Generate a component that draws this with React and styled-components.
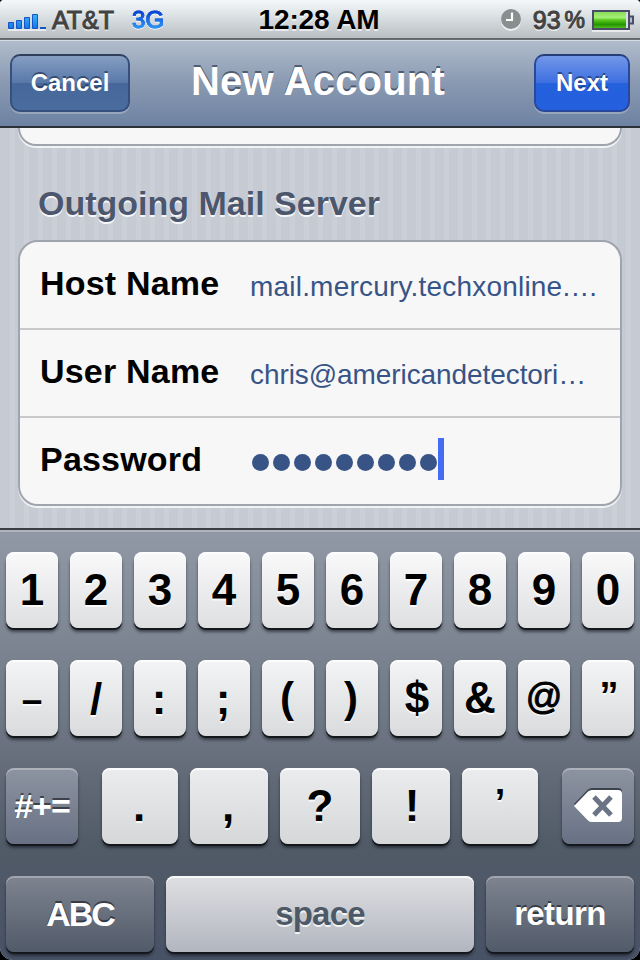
import React from "react";
import styled, { createGlobalStyle, css } from "styled-components";

const Global = createGlobalStyle`
  * { box-sizing: border-box; }
  html, body { margin: 0; padding: 0; background: #000; }
  body { font-family: "Liberation Sans", Arial, sans-serif; overflow: hidden; }
`;

const Phone = styled.main`
  width: 640px;
  height: 960px;
  display: flex;
  flex-direction: column;
  overflow: hidden;
  border-radius: 4px 4px 13px 13px;
  background: #c5cad3;
`;

const StatusBar = styled.header`
  height: 40px;
  flex: none;
  display: grid;
  grid-template-columns: 1fr auto 1fr;
  align-items: center;
  padding: 0 6px 0 8px;
  background: linear-gradient(#f4f8fa 0, #dfe4e7 14px, #b9bec2 38px, #5d6063 38px, #6f7275 40px);
`;

const StatusSide = styled.div`
  display: flex;
  align-items: center;
  justify-content: ${(p) => (p.$end ? "flex-end" : "flex-start")};
  height: 38px;
`;

const StatusText = styled.span`
  font-size: ${(p) => p.$size || 25}px;
  line-height: 38px;
  color: #424242;
  -webkit-text-stroke: 1px #424242;
  text-shadow: 0 2px 0 rgba(255, 255, 255, 0.65);
  margin-left: ${(p) => p.$gap || 0}px;
  margin-right: ${(p) => p.$after || 0}px;
`;

const Network = styled.span`
  margin-left: 18px;
  font-size: 24px;
  line-height: 38px;
  color: transparent;
  background: linear-gradient(#0a3fd0 10px, #2f9cf5 28px);
  background-clip: text;
  -webkit-text-stroke: 1px transparent;
  filter: drop-shadow(0.5px 0 0 #1f6fe6) drop-shadow(0 1px 0 rgba(255, 255, 255, 0.8));
`;

const Clock = styled.time`
  font-size: 28px;
  font-weight: 700;
  line-height: 38px;
  margin-right: 4px;
  letter-spacing: -0.1px;
  color: #000;
  text-shadow: 0 2px 0 rgba(255, 255, 255, 0.6);
`;

const NavBar = styled.nav`
  height: 88px;
  flex: none;
  display: grid;
  grid-template-columns: 120px 1fr 96px;
  align-items: start;
  padding: 14px 10px 0;
  border-top: 1px solid #d5dce4;
  border-bottom: 2px solid #2c3139;
  background: linear-gradient(#b0bccc, #8999b1 50%, #6d82a3);
`;

const NavButton = styled.button`
  height: 58px;
  margin: -1px 0 0;
  padding: 0 0 1px;
  border: 2px solid ${(p) => (p.$primary ? "#29479b" : "#35507d")};
  border-top-color: ${(p) => (p.$primary ? "#263f7b" : "#303f5c")};
  border-radius: 10px;
  font: 700 24px/50px "Liberation Sans", Arial, sans-serif;
  color: #fff;
  text-shadow: 0 -2px 0 rgba(20, 30, 60, 0.55);
  box-shadow: 0 2px 0 rgba(255, 255, 255, 0.25);
  background: ${(p) =>
    p.$primary
      ? "linear-gradient(#7397e8, #3c6fe0 50%, #2461dc 51%, #245fdf)"
      : "linear-gradient(#869ec2, #5878a9 50%, #456799 51%, #4a6c9f)"};
`;

const Title = styled.h1`
  margin: 0 28px 0 0;
  font-size: 40px;
  line-height: 52px;
  letter-spacing: 0.2px;
  text-align: center;
  white-space: nowrap;
  color: #fff;
  text-shadow: 0 -2px 0 rgba(40, 50, 70, 0.65);
`;

const Content = styled.section`
  height: 400px;
  flex: none;
  overflow: hidden;
  padding: 0 18px;
  background:
    linear-gradient(#c5cad3, #c5cad3) 0 0 / 9px 100% no-repeat,
    repeating-linear-gradient(90deg, #cbd0d8 0 5px, #c5cad3 5px 14px) 10px 0;
`;

const panel = css`
  background: #f7f7f7;
  border: 2px solid #a0a5ad;
  box-shadow: 0 2px 0 rgba(255, 255, 255, 0.75);
`;

const PreviousGroup = styled.div`
  ${panel}
  height: 18px;
  border-top: 0;
  border-radius: 0 0 20px 20px;
`;

const GroupTitle = styled.h2`
  margin: 38px 0 0 20px;
  height: 56px;
  font-size: 34px;
  line-height: 39px;
  color: #4c566c;
  text-shadow: 0 2px 0 #f5f7fa;
`;

const Group = styled.div`
  ${panel}
  border-radius: 20px;
  height: 266px;
`;

const Field = styled.label`
  display: grid;
  grid-template-columns: 210px 1fr;
  height: 88px;
  padding: 0 20px;
  border-bottom: ${(p) => (p.$last ? "0" : "2px solid #c8c9cb")};
`;

const Label = styled.span`
  font-size: 34px;
  font-weight: 700;
  line-height: 82px;
  letter-spacing: 0.2px;
`;

const Value = styled.span`
  font-size: 28px;
  line-height: 90px;
  letter-spacing: ${(p) => p.$tracking || 0}px;
  white-space: nowrap;
  color: #385487;
`;

const Secret = styled.span`
  display: flex;
  align-items: center;
  gap: 4px;
  height: 82px;
  padding-left: 2px;
`;

const Dot = styled.i`
  width: 17px;
  height: 17px;
  margin-top: 7px;
  border-radius: 50%;
  background: #385487;
`;

const Caret = styled.i`
  width: 6px;
  height: 42px;
  margin-left: -3px;
  background: #446df4;
`;

const Keyboard = styled.section`
  flex: 1;
  display: flex;
  flex-direction: column;
  gap: 32px;
  padding: 22px 6px 0;
  border-top: 2px solid #3b3f44;
  box-shadow: inset 0 2px 0 #b0b4bd;
  background: linear-gradient(#9299a6, #6b7280 49%, #515b67 73%, #485266);
`;

const KeyRow = styled.div`
  display: grid;
  grid-template-columns: ${(p) => p.$columns};
  column-gap: 12px;
  height: 76px;
`;

const ModifierSlot = styled.div`
  display: grid;
  grid-template-columns: 72px;
  justify-content: ${(p) => (p.$end ? "end" : "start")};
`;

const tones = {
  number: "linear-gradient(#f9f9fa, #dedfe1)",
  symbol: "linear-gradient(#f3f4f6, #dadbdd)",
  punctuation: "linear-gradient(#ebecee, #d6d7d9)",
  space: "linear-gradient(#dedfe2, #b2b6bf)",
  modifier: "linear-gradient(#8d94a1, #687184)",
  action: "linear-gradient(#7e8490, #515a69)",
};
const isDark = (tone) => tone === "modifier" || tone === "action";

const Key = styled.button`
  display: flex;
  align-items: center;
  justify-content: center;
  min-width: 0;
  padding: 0;
  border: 0;
  border-radius: 8px;
  font: 700 ${(p) => p.$size || 44}px/76px "Liberation Sans", Arial, sans-serif;
  letter-spacing: ${(p) => p.$tracking || 0}px;
  color: ${(p) => (isDark(p.$tone) ? "#fff" : p.$tone === "space" ? "#4e5967" : "#000")};
  text-shadow: ${(p) => (isDark(p.$tone) ? "0 -2px 0 rgba(30,35,45,.7)" : "0 2px 0 rgba(255,255,255,.8)")};
  background: ${(p) => tones[p.$tone]};
  box-shadow: inset 0 2px 0 ${(p) => (isDark(p.$tone) ? "rgba(255,255,255,.28)" : "rgba(255,255,255,.8)")},
    0 2px 0 #14171b, 0 4px 3px rgba(20, 25, 32, 0.6);
`;

const Glyph = styled.span`
  transform: translate(${(p) => p.$nudge || 0}px, ${(p) => p.$shift || 0}px);
  font-weight: ${(p) => p.$weight || 700};
  -webkit-text-stroke: ${(p) => (p.$weight === 400 ? "1px #000" : "0")};
`;

const Signal = () => (
  <svg width="40" height="22" viewBox="0 0 40 22">
    <defs>
      <linearGradient id="signal" x2="0" y2="1">
        <stop stopColor="#39b5fc" />
        <stop offset="1" stopColor="#1474e8" />
      </linearGradient>
    </defs>
    <path d="M0 20h38v2H0z" fill="#fff" opacity=".6" />
    <g fill="url(#signal)" stroke="#1257c5">
      <path d="M.5 13.500h5v6h-5zM8.500 11.500h5v8h-5zM16.500 8.500h5v11h-5zM24.500 5.500h5v14h-5z" />
    </g>
    <path d="M32 18h6v2h-6z" fill="#1257c5" />
  </svg>
);

const AlarmClock = () => (
  <svg width="22" height="24" viewBox="0 0 22 24">
    <circle cx="11" cy="13" r="10" fill="#fff" opacity=".7" />
    <circle cx="11" cy="11" r="10" fill="#87908f" />
    <path d="M12 4.500v7.500H6" fill="none" stroke="#fff" strokeWidth="2.200" />
  </svg>
);

const Battery = () => (
  <svg width="42" height="24" viewBox="0 0 42 24">
    <defs>
      <linearGradient id="charge" x2="0" y2="1">
        <stop stopColor="#8ade5a" />
        <stop offset=".35" stopColor="#a5f076" />
        <stop offset=".5" stopColor="#5ac91f" />
        <stop offset=".78" stopColor="#249600" />
        <stop offset="1" stopColor="#51bb1d" />
      </linearGradient>
    </defs>
    <path d="M0 22h38v2H0z" fill="#fff" opacity=".6" />
    <path d="M1 3h36v18H1z" fill="#d9dde6" stroke="#4a4d66" strokeWidth="2" />
    <path d="M2 4h32v16H2z" fill="url(#charge)" />
    <path d="M38 8.500h3v7h-3" fill="#b9bdc9" stroke="#4a4d66" strokeWidth="2" />
  </svg>
);

const DeleteIcon = () => (
  <svg width="50" height="36" viewBox="0 0 50 36">
    <path d="M1 16 15 1.500Q16.500 0 19 0h26q4 0 4 4v24q0 4-4 4H19q-2.500 0-4-1.500z" fill="#3c434f" />
    <path d="M1 18 15 3.500Q16.500 2 19 2h26q4 0 4 4v24q0 4-4 4H19q-2.500 0-4-1.500z" fill="#fff" />
    <path d="m21 9 17 18M38 9 21 27" stroke="#6b7484" strokeWidth="5" />
  </svg>
);

const numbers = [..."1234567890"];
const symbols = [
  { char: "–", size: 37, shift: 2 },
  { char: "/", shift: 1 },
  { char: ":", nudge: -1, shift: 1 },
  { char: ";", nudge: -1, shift: 1 },
  { char: "(", size: 42, nudge: -1 },
  { char: ")", size: 42, nudge: -1 },
  { char: "$", nudge: 1 },
  { char: "&" },
  { char: "@", size: 36, shift: -1, weight: 400 },
  { char: "”", size: 38, nudge: 1, shift: -2 },
];
const punctuation = [
  { char: ".", nudge: -1 },
  { char: ",", nudge: -1 },
  { char: "?" },
  { char: "!", nudge: 1 },
  { char: "’", size: 38, shift: -3 },
];

export default function App() {
  return (
    <>
      <Global />
      <Phone>
        <StatusBar>
          <StatusSide>
            <Signal />
            <StatusText $gap={4}>AT&amp;T</StatusText>
            <Network>3G</Network>
          </StatusSide>
          <Clock>12:28 AM</Clock>
          <StatusSide $end>
            <AlarmClock />
            <StatusText $gap={11}>93</StatusText>
            <StatusText $size={23} $gap={4} $after={7}>%</StatusText>
            <Battery />
          </StatusSide>
        </StatusBar>
        <NavBar>
          <NavButton>Cancel</NavButton>
          <Title>New Account</Title>
          <NavButton $primary>Next</NavButton>
        </NavBar>
        <Content>
          <PreviousGroup />
          <GroupTitle>Outgoing Mail Server</GroupTitle>
          <Group>
            <Field>
              <Label>Host Name</Label>
              <Value $tracking={0.2}>mail.mercury.techxonline.…</Value>
            </Field>
            <Field>
              <Label>User Name</Label>
              <Value $tracking={-0.08}>chris@americandetectori…</Value>
            </Field>
            <Field $last>
              <Label>Password</Label>
              <Secret>
                {Array.from({ length: 9 }, (_, i) => <Dot key={i} />)}
                <Caret />
              </Secret>
            </Field>
          </Group>
        </Content>
        <Keyboard>
          <KeyRow $columns="repeat(10, 52px)">
            {numbers.map((n) => <Key key={n} $tone="number">{n}</Key>)}
          </KeyRow>
          <KeyRow $columns="repeat(10, 52px)">
            {symbols.map((s) => (
              <Key key={s.char} $tone="symbol" $size={s.size}>
                <Glyph $shift={s.shift} $nudge={s.nudge} $weight={s.weight}>{s.char}</Glyph>
              </Key>
            ))}
          </KeyRow>
          <KeyRow $columns="84px 76px 78px 80px 78px 76px 84px">
            <ModifierSlot><Key $tone="modifier" $size={34} $tracking={-1}>#+=</Key></ModifierSlot>
            {punctuation.map((s) => (
              <Key key={s.char} $tone="punctuation" $size={s.size}>
                <Glyph $shift={s.shift} $nudge={s.nudge}>{s.char}</Glyph>
              </Key>
            ))}
            <ModifierSlot $end><Key $tone="modifier"><DeleteIcon /></Key></ModifierSlot>
          </KeyRow>
          <KeyRow $columns="148px 308px 148px">
            <Key $tone="action" $size={34} $tracking={-2}>ABC</Key>
            <Key $tone="space" $size={33} $tracking={-0.8}>space</Key>
            <Key $tone="action" $size={33} $tracking={-0.6}>return</Key>
          </KeyRow>
        </Keyboard>
      </Phone>
    </>
  );
}
